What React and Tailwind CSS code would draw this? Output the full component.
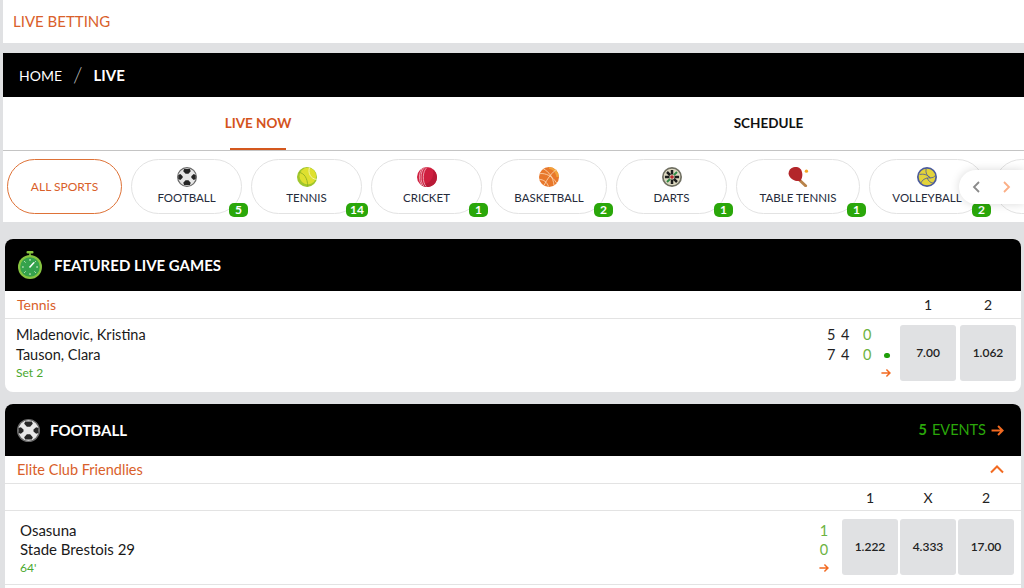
const font = "font-['Lato','Noto_Sans',sans-serif]";

function SoccerBall({ size = 20 }) {
  return (
    <svg width={size} height={size} viewBox="0 0 24 24">
      <circle cx="12" cy="12" r="11.300" fill="#e8e8e8" stroke="#6a6a6a" strokeWidth="1.400" />
      <path d="M8.500 2.500h7l1 2.500-2.800 3h-3.400L7.500 5Z" fill="#262626" />
      <path d="M8.500 21.500h7l1-2.500-2.800-3h-3.400l-2.800 3Z" fill="#262626" />
      <path d="M1.500 9.500l2.500-1 2.800 2.500v2L4 15.500l-2.500-1Z" fill="#262626" />
      <path d="M22.500 9.500l-2.500-1-2.800 2.500v2l2.800 2.500 2.500-1Z" fill="#262626" />
    </svg>
  );
}

function TennisBall() {
  return (
    <svg width="20" height="20" viewBox="0 0 24 24">
      <circle cx="12" cy="12" r="12" fill="#9fc62c" />
      <circle cx="13" cy="11" r="10" fill="#dfe02f" />
      <path d="M15 .8C13 7 16 14 23.500 15" fill="none" stroke="#f6f6c0" strokeWidth="1" />
      <path d="M2.500 6.500c6 1 10 6 10.500 17" fill="none" stroke="#8aad22" strokeWidth="1" />
    </svg>
  );
}

function CricketBall() {
  return (
    <svg width="20" height="20" viewBox="0 0 24 24">
      <circle cx="12" cy="12" r="12" fill="#cf1f3f" />
      <path d="M24 12a12 12 0 0 1-20 9A14 14 0 0 0 19 3a12 12 0 0 1 5 9Z" fill="#b91a37" />
      <path d="M12 .5C6.500 5 6 18 11 23.500M9 .8C3.500 6 3.500 18 8.500 23.200M6.300 2C1.800 7 1.800 17 6 22" fill="none" stroke="#f6c8d0" strokeWidth=".9" />
    </svg>
  );
}

function Basketball() {
  return (
    <svg width="20" height="20" viewBox="0 0 24 24">
      <circle cx="12" cy="12" r="12" fill="#e8772a" />
      <path d="M12 0a12 12 0 0 1 12 12h-3C20 6 17 3 12 2Z" fill="#f2a23a" />
      <path d="M1 8c7-1 15 3 20 11M5 2c7 4 12 10 13 20M.5 15c5 0 9 3 11 8.500M21 3C16 6 10 14 6 22" fill="none" stroke="#fbd9b5" strokeWidth="1" />
    </svg>
  );
}

function Dartboard() {
  return (
    <svg width="20" height="20" viewBox="0 0 24 24">
      <circle cx="12" cy="12" r="12" fill="#6f6f62" />
      <circle cx="12" cy="12" r="10" fill="#dcd8c0" />
      <g stroke="#1d1d1d" strokeWidth="3">
        <path d="M12 3.500V9M12 15v5.500M3.500 12H9M15 12h5.500M6 6l3.800 3.800M14.200 14.200L18 18" />
      </g>
      <g stroke="#2f8a45" strokeWidth="2.400">
        <path d="M18 6l-3.800 3.800M6 18l3.800-3.800" />
      </g>
      <circle cx="12" cy="12" r="2.200" fill="#b7242b" />
    </svg>
  );
}

function Paddle() {
  return (
    <svg width="21" height="20" viewBox="0 0 25 24">
      <path d="M13 15l8 7.500" stroke="#b8834a" strokeWidth="3.600" strokeLinecap="round" />
      <path d="M.5 8A8.500 8.500 0 0 1 15.500 3c2.500 4.500 2 10-.5 13.500C10 18 2 15 .5 8Z" fill="#b3262a" />
      <circle cx="22" cy="5" r="2" fill="#f5a623" />
    </svg>
  );
}

function Volleyball() {
  return (
    <svg width="20" height="20" viewBox="0 0 24 24">
      <circle cx="12" cy="12" r="12" fill="#4a5a9c" />
      <circle cx="12" cy="12" r="10" fill="#e3d33a" />
      <path d="M11 2c-1 5 1 9 5 11M3 9c5-1 9 0 13 4M5 19c1-3 4-6 11-6 3 0 5-1 6-3M12 13c2 4 4 6 7 6" fill="none" stroke="#4a5a9c" strokeWidth="1" />
    </svg>
  );
}

function Stopwatch() {
  return (
    <svg width="24" height="28" viewBox="0 0 24 28">
      <rect x="8.500" y="0" width="7" height="2.500" rx="1" fill="#8bc63f" />
      <rect x="11" y="2" width="2" height="3" fill="#6ea62e" />
      <circle cx="12" cy="16" r="12" fill="#86c440" />
      <circle cx="12" cy="16" r="9.800" fill="#35a24c" />
      <path d="M12 8v1.800M12 22.200V24M4 16h1.800M18.200 16H20M6.300 10.300l1.200 1.200M17.700 10.300l-1.200 1.200M6.300 21.700l1.200-1.200M17.700 21.700l-1.200-1.200" stroke="#e4f5dc" strokeWidth="1" />
      <path d="M11.500 16.500l4.500-5" stroke="#fff" strokeWidth="1.500" />
    </svg>
  );
}

function Arrow({ size = 11 }) {
  return (
    <svg width={size} height={size} viewBox="0 0 12 12" fill="none" stroke="#f26a21" strokeWidth="1.800">
      <path d="M.5 6h10M6.500 1.800l4.200 4.200-4.200 4.200" />
    </svg>
  );
}

const sports = [
  { name: "FOOTBALL", count: "5", icon: <SoccerBall />, width: "w-[111px]" },
  { name: "TENNIS", count: "14", icon: <TennisBall />, width: "w-[111px]" },
  { name: "CRICKET", count: "1", icon: <CricketBall />, width: "w-[111px]" },
  { name: "BASKETBALL", count: "2", icon: <Basketball />, width: "w-[116px]" },
  { name: "DARTS", count: "1", icon: <Dartboard />, width: "w-[111px]" },
  { name: "TABLE TENNIS", count: "1", icon: <Paddle />, width: "w-[124px]" },
  { name: "VOLLEYBALL", count: "2", icon: <Volleyball />, width: "w-[116px]" },
];

function SportPill({ sport }) {
  return (
    <div className={`relative h-[55px] shrink-0 ${sport.width} flex flex-col items-center rounded-[28px] border border-[#e3e3e3] pt-[7px] text-[11.500px] leading-[16px] text-[#252b3b]`}>
      <div className="h-[20px]">{sport.icon}</div>
      <span className="mt-[3px] whitespace-nowrap">{sport.name}</span>
      {/* count badge hangs off the bottom right of the pill */}
      <span className="absolute bottom-[-4px] right-[-7px] flex h-[14px] min-w-[19px] items-center justify-center rounded-[5px] bg-[#2aa70a] px-[4px] text-[12px] font-bold text-white">
        {sport.count}
      </span>
    </div>
  );
}

function OddsButton({ value, width = "w-[56px]" }) {
  return (
    <div className={`${width} flex h-[56px] items-center justify-center rounded-[3px] bg-[#e0e1e3] text-[12px] font-semibold text-[#222]`}>
      {value}
    </div>
  );
}

export default function App() {
  return (
    <div className={`h-[588px] w-[1024px] overflow-hidden bg-[#e0e1e3] pl-[3px] ${font}`}>
      {/* title */}
      <div className="flex h-[43px] items-center bg-white pl-[10px] text-[15px] text-[#d9602a]">LIVE BETTING</div>

      {/* breadcrumb */}
      <div className="mt-[10px] flex h-[44px] items-center bg-black pl-[16px] text-[14px] text-white">
        <span>HOME</span>
        <span className="ml-[11px] mr-[11px] text-[22px] font-light leading-none text-[#bbb]">/</span>
        <span className="text-[15px] font-bold">LIVE</span>
      </div>

      {/* tabs */}
      <div className="flex h-[54px] border-b border-[#c4c4c4] bg-white text-[13.500px] font-bold">
        <div className="flex w-[510px] justify-center">
          <div className="relative flex w-[56px] items-center justify-center whitespace-nowrap text-[#d4531c]">
            LIVE NOW
            <span className="absolute bottom-0 left-0 h-[2px] w-full bg-[#d4581e]" />
          </div>
        </div>
        <div className="flex w-[511px] items-center justify-center text-[#111]">SCHEDULE</div>
      </div>

      {/* sports scroller */}
      <div className="relative h-[71px] overflow-hidden bg-white">
        <div className="flex gap-[9px] pl-[4px] pt-[8px]">
          <div className="flex h-[55px] w-[115px] shrink-0 items-center justify-center rounded-[28px] border border-[#de7237] text-[12px] text-[#d9602a]">
            ALL SPORTS
          </div>
          {sports.map((sport) => (
            <SportPill key={sport.name} sport={sport} />
          ))}
          <div className="h-[55px] w-[111px] shrink-0 rounded-[28px] border border-[#e3e3e3]" />
        </div>
        <div className="absolute left-[956px] top-[19px] flex h-[34px] w-[65px] items-center gap-[21px] rounded-l-[17px] bg-white pl-[12px] shadow-[0_0_10px_rgba(0,0,0,0.15)]">
          <svg width="10" height="14" viewBox="0 0 10 14" fill="none" stroke="#8a8a8a" strokeWidth="1.800"><path d="M8 2L3 7l5 5" /></svg>
          <svg width="10" height="14" viewBox="0 0 10 14" fill="none" stroke="#fbae85" strokeWidth="1.800"><path d="M2 2l5 5-5 5" /></svg>
        </div>
      </div>

      {/* featured card */}
      <section className="ml-[2px] mt-[17px] w-[1016px] overflow-hidden rounded-[8px] bg-white">
        <div className="flex h-[52px] items-center bg-black pl-[13px] text-[15px] font-bold text-white">
          <Stopwatch />
          <span className="ml-[12px]">FEATURED LIVE GAMES</span>
        </div>
        <div className="flex h-[28px] items-center border-b border-[#e3e3e3] pl-[12px] pr-[5px] text-[14px] text-[#d9602a]">
          <span className="flex-1">Tennis</span>
          <span className="w-[56px] text-center text-[#222]">1</span>
          <span className="ml-[4px] w-[56px] text-center text-[#222]">2</span>
        </div>
        <div className="flex h-[73px] pl-[11px] pr-[5px]">
          <div className="flex-1 pt-[6px] text-[14.500px] leading-[20px] text-[#1a1a1a]">
            <div>Mladenovic, Kristina</div>
            <div>Tauson, Clara</div>
            <div className="text-[12px] leading-[16px] text-[#4aa82e]">Set 2</div>
          </div>
          <div className="mr-[9px] w-[64px] pt-[6px] text-[14.500px] leading-[20px] text-[#222]">
            <div className="flex">
              <span className="w-[14px]">5</span>
              <span className="w-[22px]">4</span>
              <span className="text-[#6cb33f]">0</span>
            </div>
            <div className="flex items-center">
              <span className="w-[14px]">7</span>
              <span className="w-[22px]">4</span>
              <span className="w-[21px] text-[#6cb33f]">0</span>
              <span className="h-[5px] w-[6px] rounded-full bg-[#1f9e0a]" />
            </div>
            <div className="mt-[3px] flex justify-end"><Arrow size={10} /></div>
          </div>
          <div className="flex gap-[4px] pt-[6px]">
            <OddsButton value="7.00" />
            <OddsButton value="1.062" />
          </div>
        </div>
      </section>

      {/* football card */}
      <section className="ml-[2px] mt-[12px] w-[1016px] rounded-[8px] bg-white">
        <div className="flex h-[52px] items-center rounded-t-[8px] bg-black pl-[12px] pr-[17px] text-[14.500px] text-white">
          <SoccerBall size={23} />
          <span className="ml-[10px] flex-1 text-[15px] font-bold">FOOTBALL</span>
          <span className="font-bold text-[#2aa70a]">5</span>
          <span className="ml-[5px] text-[#2aa70a]">EVENTS</span>
          <span className="ml-[5px] flex items-center"><Arrow size={13} /></span>
        </div>
        <div className="flex h-[28px] items-center justify-between border-b border-[#e3e3e3] pl-[12px] pr-[17px] text-[14.500px] text-[#d9602a]">
          <span>Elite Club Friendlies</span>
          <svg width="14" height="9" viewBox="0 0 14 9" fill="none" stroke="#f26a21" strokeWidth="2"><path d="M1 7.500l6-6 6 6" /></svg>
        </div>
        <div className="flex h-[27px] items-center justify-end border-b border-[#e3e3e3] pr-[7px] text-[14px] text-[#222]">
          <span className="w-[56px] text-center">1</span>
          <span className="ml-[2px] w-[56px] text-center">X</span>
          <span className="ml-[2px] w-[56px] text-center">2</span>
        </div>
        <div className="flex h-[74px] border-b border-[#e3e3e3] pl-[15px] pr-[7px]">
          <div className="flex-1 pt-[10px] text-[15px] leading-[19px] text-[#1a1a1a]">
            <div>Osasuna</div>
            <div>Stade Brestois 29</div>
            <div className="text-[12px] leading-[18px] text-[#4aa82e]">64'</div>
          </div>
          <div className="mr-[13px] flex w-[10px] flex-col items-center pt-[10px] text-[14.500px] leading-[19px] text-[#6cb33f]">
            <span>1</span>
            <span>0</span>
            <span className="mt-[4px]"><Arrow size={10} /></span>
          </div>
          <div className="flex gap-[2px] pt-[8px]">
            <OddsButton value="1.222" />
            <OddsButton value="4.333" />
            <OddsButton value="17.00" />
          </div>
        </div>
        <div className="h-[20px]" />
      </section>
    </div>
  );
}
